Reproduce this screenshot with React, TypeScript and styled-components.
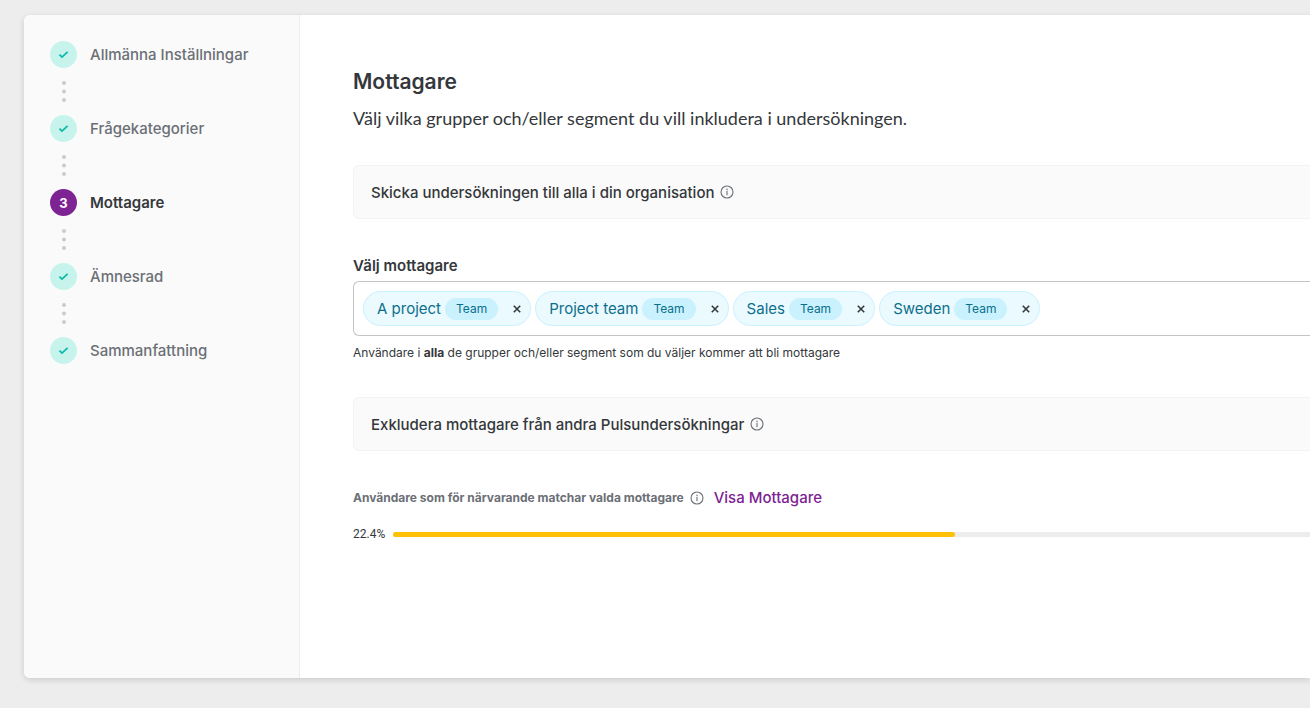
import { useState } from "react";
import styled, { createGlobalStyle } from "styled-components";

const GlobalStyle = createGlobalStyle`
  * { box-sizing: border-box; }
  body {
    margin: 0;
    background: #ededed;
    color: #34373b;
    font-family: Inter, "Liberation Sans", sans-serif;
    font-size: 15px;
  }
  button, input { font: inherit; color: inherit; }
`;

const Page = styled.div`
  display: flex;
  min-height: 100vh;
  padding: 15px 0 30px 24px;
  overflow: hidden;
`;

const Card = styled.div`
  display: flex;
  flex: 1;
  min-width: 0;
  background: #fff;
  border-radius: 6px 0 0 6px;
  box-shadow: 0 2px 6px rgba(0, 0, 0, 0.14);
`;

const Sidebar = styled.nav`
  flex: 0 0 276px;
  padding: 26px;
  background: #fafafa;
  border-right: 1px solid #ededed;
  border-radius: 6px 0 0 6px;
`;

const StepList = styled.ol`
  display: flex;
  flex-direction: column;
  margin: 0;
  padding: 0;
  list-style: none;
`;

const StepButton = styled.button<{ $current: boolean }>`
  display: flex;
  align-items: center;
  gap: 13px;
  width: 100%;
  padding: 0;
  border: 0;
  background: none;
  line-height: 26px;
  text-align: left;
  cursor: pointer;
  font-weight: ${(p) => (p.$current ? 600 : 500)};
  color: ${(p) => (p.$current ? "#34373b" : "#6b6f76")};
`;

const StepMarker = styled.span<{ $current: boolean }>`
  display: grid;
  place-items: center;
  width: 27px;
  height: 27px;
  border-radius: 50%;
  font-size: 13px;
  font-weight: 700;
  color: ${(p) => (p.$current ? "#fff" : "#0fb9a8")};
  background: ${(p) => (p.$current ? "#7d2394" : "#c6f4ec")};
`;

const Connector = styled.svg`
  display: block;
  width: 27px;
  height: 47px;
  fill: #cbcbcb;
`;

const Main = styled.main`
  flex: 1;
  min-width: 0;
  padding: 53px 0 53px 53px;
`;

const Title = styled.h1`
  margin: 0 0 10px;
  font-size: 21px;
  font-weight: 600;
  line-height: 28px;
`;

const Lead = styled.p`
  margin: 0 0 35px;
  font-family: Lato, Inter, sans-serif;
  font-size: 18px;
  line-height: 24px;
`;

const OptionBox = styled.section`
  display: flex;
  align-items: center;
  gap: 6px;
  height: 54px;
  padding: 0 17px;
  background: #fafafa;
  border: 1px solid #f3f3f3;
  border-right: 0;
  border-radius: 6px 0 0 6px;
  font-weight: 500;
`;

const Field = styled.div`
  display: flex;
  flex-direction: column;
  margin: 37px 0 35px;
`;

const FieldLabel = styled.label`
  margin-bottom: 5px;
  font-weight: 600;
  line-height: 20px;
`;

const TagBox = styled.div`
  display: flex;
  flex-wrap: wrap;
  gap: 4px;
  padding: 9px;
  border: 1px solid #c4c4c6;
  border-right: 0;
  border-radius: 6px 0 0 6px;
`;

const Tag = styled.span`
  display: flex;
  align-items: center;
  height: 35px;
  padding: 0 3px 0 13px;
  color: #0b6f8c;
  background: #ebfaff;
  border: 1px solid #c9f2fe;
  border-radius: 18px;
`;

const TagKind = styled.span`
  margin: 0 9px 0 4px;
  padding: 0 11px;
  border-radius: 11px;
  background: #c9f2fe;
  font-size: 12px;
  line-height: 22px;
`;

const RemoveButton = styled.button`
  display: grid;
  place-items: center;
  width: 20px;
  height: 20px;
  padding: 0;
  border: 0;
  background: none;
  color: #34373b;
  cursor: pointer;
`;

const TagInput = styled.input`
  flex: 1;
  min-width: 40px;
  border: 0;
  outline: 0;
  background: none;
`;

const Hint = styled.p`
  margin: 8px 0 0;
  font-size: 12px;
  line-height: 18px;
`;

const MatchRow = styled.div`
  display: flex;
  align-items: center;
  margin: 35px 0 15px;
  line-height: 24px;
`;

const MatchLabel = styled.span`
  margin-right: 6px;
  color: #6b6f76;
  font-size: 12px;
  font-weight: 700;
`;

const ShowLink = styled.a`
  margin-left: 10px;
  color: #7d2394;
  font-weight: 500;
  text-decoration: none;
`;

const ProgressRow = styled.div`
  display: flex;
  align-items: center;
  gap: 8px;
  font-family: Roboto, Inter, sans-serif;
  font-size: 12px;
  line-height: 18px;
`;

const Track = styled.div`
  flex: 1;
  height: 5px;
  background: #ededed;
  border-radius: 3px 0 0 3px;
`;

const Fill = styled.div`
  height: 100%;
  background: #ffc107;
  border-radius: 3px;
`;

const InfoSvg = styled.svg`
  flex: none;
  width: 14px;
  height: 14px;
  fill: none;
  stroke: #6b6f76;
`;

function InfoIcon() {
  return (
    <InfoSvg viewBox="0 0 14 14" aria-hidden="true">
      <circle cx="7" cy="7" r="6" strokeWidth="1.1" />
      <path d="M7 5.8v4.4" strokeWidth="1.1" />
      <circle cx="7" cy="4.2" r="0.75" fill="#6b6f76" stroke="none" />
    </InfoSvg>
  );
}

function CheckIcon() {
  return (
    <svg width="11" height="9" viewBox="0 0 11 9" fill="none" aria-hidden="true">
      <path d="M1.4 4.6 4 7.1 9.6 1.9" stroke="currentColor" strokeWidth="1.8" />
    </svg>
  );
}

function CrossIcon() {
  return (
    <svg width="8" height="8" viewBox="0 0 8 8" fill="none" aria-hidden="true">
      <path d="M.8.8l6.4 6.4M7.2.8.8 7.2" stroke="currentColor" strokeWidth="1.6" />
    </svg>
  );
}

const steps = ["Allmänna Inställningar", "Frågekategorier", "Mottagare", "Ämnesrad", "Sammanfattning"];
const currentStep = 2;
const barShare = 61.3;

export default function App() {
  const [tags, setTags] = useState(["A project", "Project team", "Sales", "Sweden"]);

  return (
    <>
      <GlobalStyle />
      <Page>
        <Card>
          <Sidebar>
            <StepList>
              {steps.map((step, i) => (
                <li key={step}>
                  <StepButton type="button" $current={i === currentStep}>
                    <StepMarker $current={i === currentStep}>
                      {i === currentStep ? i + 1 : <CheckIcon />}
                    </StepMarker>
                    {step}
                  </StepButton>
                  {i < steps.length - 1 && (
                    <Connector viewBox="0 0 27 47" aria-hidden="true">
                      <circle cx="14" cy="15" r="2" />
                      <circle cx="14" cy="23.5" r="2" />
                      <circle cx="14" cy="32" r="2" />
                    </Connector>
                  )}
                </li>
              ))}
            </StepList>
          </Sidebar>
          <Main>
            <Title>Mottagare</Title>
            <Lead>Välj vilka grupper och/eller segment du vill inkludera i undersökningen.</Lead>
            <OptionBox>
              Skicka undersökningen till alla i din organisation
              <InfoIcon />
            </OptionBox>
            <Field>
              <FieldLabel htmlFor="recipients">Välj mottagare</FieldLabel>
              <TagBox>
                {tags.map((tag) => (
                  <Tag key={tag}>
                    {tag}
                    <TagKind>Team</TagKind>
                    <RemoveButton
                      type="button"
                      aria-label={`Ta bort ${tag}`}
                      onClick={() => setTags(tags.filter((t) => t !== tag))}
                    >
                      <CrossIcon />
                    </RemoveButton>
                  </Tag>
                ))}
                <TagInput id="recipients" type="text" />
              </TagBox>
              <Hint>
                Användare i <b>alla</b> de grupper och/eller segment som du väljer kommer att bli mottagare
              </Hint>
            </Field>
            <OptionBox>
              Exkludera mottagare från andra Pulsundersökningar
              <InfoIcon />
            </OptionBox>
            <MatchRow>
              <MatchLabel>Användare som för närvarande matchar valda mottagare</MatchLabel>
              <InfoIcon />
              <ShowLink href="#mottagare">Visa Mottagare</ShowLink>
            </MatchRow>
            <ProgressRow>
              22.4%
              <Track>
                <Fill style={{ width: `${barShare}%` }} />
              </Track>
            </ProgressRow>
          </Main>
        </Card>
      </Page>
    </>
  );
}
